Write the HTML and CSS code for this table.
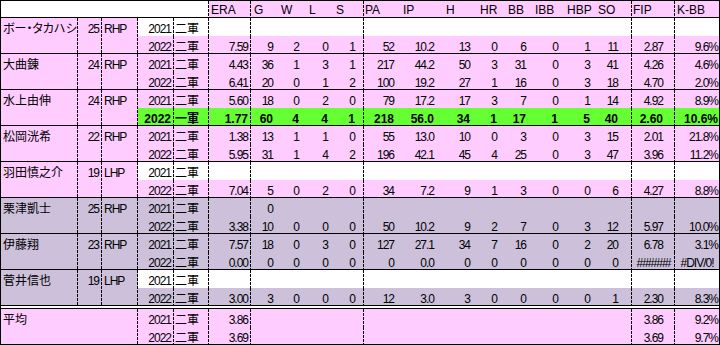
FILE: index.html
```html
<!DOCTYPE html>
<html lang="ja">
<head>
<meta charset="utf-8">
<title>投手成績</title>
<link rel="stylesheet" href="styles.css">
</head>
<body>
<div class="sheet">
  <div class="head">
    <div class="blank"></div>
    <div class="stats">
      <div>ERA</div><div>G</div><div>W</div><div>L</div><div>S</div><div>PA</div><div>IP</div><div>H</div><div>HR</div><div>BB</div><div>IBB</div><div>HBP</div><div>SO</div><div>FIP</div><div>K-BB</div>
    </div>
  </div>

  <div class="group pink">
    <div class="name">ボー・タカハシ</div>
    <div class="age">25</div>
    <div class="hand">RHP</div>
    <div class="rows">
      <div class="row r1 w">
        <div class="yr">2021</div><div class="gun">二軍</div>
        <div class="stats"><div></div><div></div><div></div><div></div><div></div><div></div><div></div><div></div><div></div><div></div><div></div><div></div><div></div><div></div><div></div></div>
      </div>
      <div class="row r2">
        <div class="yr">2022</div><div class="gun">二軍</div>
        <div class="stats"><div>7.59</div><div>9</div><div>2</div><div>0</div><div>1</div><div>52</div><div>10.2</div><div>13</div><div>0</div><div>6</div><div>0</div><div>1</div><div>11</div><div>2.87</div><div>9.6%</div></div>
      </div>
    </div>
  </div>

  <div class="group pink">
    <div class="name">大曲錬</div>
    <div class="age">24</div>
    <div class="hand">RHP</div>
    <div class="rows">
      <div class="row r1">
        <div class="yr">2021</div><div class="gun">二軍</div>
        <div class="stats"><div>4.43</div><div>36</div><div>1</div><div>3</div><div>1</div><div>217</div><div>44.2</div><div>50</div><div>3</div><div>31</div><div>0</div><div>3</div><div>41</div><div>4.26</div><div>4.6%</div></div>
      </div>
      <div class="row r2">
        <div class="yr">2022</div><div class="gun">二軍</div>
        <div class="stats"><div>6.41</div><div>20</div><div>0</div><div>1</div><div>2</div><div>100</div><div>19.2</div><div>27</div><div>1</div><div>16</div><div>0</div><div>3</div><div>18</div><div>4.70</div><div>2.0%</div></div>
      </div>
    </div>
  </div>

  <div class="group pink">
    <div class="name">水上由伸</div>
    <div class="age">24</div>
    <div class="hand">RHP</div>
    <div class="rows">
      <div class="row r1">
        <div class="yr">2021</div><div class="gun">二軍</div>
        <div class="stats"><div>5.60</div><div>18</div><div>0</div><div>2</div><div>0</div><div>79</div><div>17.2</div><div>17</div><div>3</div><div>7</div><div>0</div><div>1</div><div>14</div><div>4.92</div><div>8.9%</div></div>
      </div>
      <div class="row r2 g">
        <div class="yr">2022</div><div class="gun">一軍</div>
        <div class="stats"><div>1.77</div><div>60</div><div>4</div><div>4</div><div>1</div><div>218</div><div>56.0</div><div>34</div><div>1</div><div>17</div><div>1</div><div>5</div><div>40</div><div>2.60</div><div>10.6%</div></div>
      </div>
    </div>
  </div>

  <div class="group pink">
    <div class="name">松岡洸希</div>
    <div class="age">22</div>
    <div class="hand">RHP</div>
    <div class="rows">
      <div class="row r1">
        <div class="yr">2021</div><div class="gun">二軍</div>
        <div class="stats"><div>1.38</div><div>13</div><div>1</div><div>1</div><div>0</div><div>55</div><div>13.0</div><div>10</div><div>0</div><div>3</div><div>0</div><div>3</div><div>15</div><div>2.01</div><div>21.8%</div></div>
      </div>
      <div class="row r2">
        <div class="yr">2022</div><div class="gun">二軍</div>
        <div class="stats"><div>5.95</div><div>31</div><div>1</div><div>4</div><div>2</div><div>196</div><div>42.1</div><div>45</div><div>4</div><div>25</div><div>0</div><div>3</div><div>47</div><div>3.96</div><div>11.2%</div></div>
      </div>
    </div>
  </div>

  <div class="group pink">
    <div class="name">羽田慎之介</div>
    <div class="age">19</div>
    <div class="hand">LHP</div>
    <div class="rows">
      <div class="row r1 w">
        <div class="yr">2021</div><div class="gun">二軍</div>
        <div class="stats"><div></div><div></div><div></div><div></div><div></div><div></div><div></div><div></div><div></div><div></div><div></div><div></div><div></div><div></div><div></div></div>
      </div>
      <div class="row r2">
        <div class="yr">2022</div><div class="gun">二軍</div>
        <div class="stats"><div>7.04</div><div>5</div><div>0</div><div>2</div><div>0</div><div>34</div><div>7.2</div><div>9</div><div>1</div><div>3</div><div>0</div><div>0</div><div>6</div><div>4.27</div><div>8.8%</div></div>
      </div>
    </div>
  </div>

  <div class="group lav">
    <div class="name">栗津凱士</div>
    <div class="age">25</div>
    <div class="hand">RHP</div>
    <div class="rows">
      <div class="row r1">
        <div class="yr">2021</div><div class="gun">二軍</div>
        <div class="stats"><div></div><div>0</div><div></div><div></div><div></div><div></div><div></div><div></div><div></div><div></div><div></div><div></div><div></div><div></div><div></div></div>
      </div>
      <div class="row r2">
        <div class="yr">2022</div><div class="gun">二軍</div>
        <div class="stats"><div>3.38</div><div>10</div><div>0</div><div>0</div><div>0</div><div>50</div><div>10.2</div><div>9</div><div>2</div><div>7</div><div>0</div><div>3</div><div>12</div><div>5.97</div><div>10.0%</div></div>
      </div>
    </div>
  </div>

  <div class="group lav">
    <div class="name">伊藤翔</div>
    <div class="age">23</div>
    <div class="hand">RHP</div>
    <div class="rows">
      <div class="row r1">
        <div class="yr">2021</div><div class="gun">二軍</div>
        <div class="stats"><div>7.57</div><div>18</div><div>0</div><div>3</div><div>0</div><div>127</div><div>27.1</div><div>34</div><div>7</div><div>16</div><div>0</div><div>2</div><div>20</div><div>6.78</div><div>3.1%</div></div>
      </div>
      <div class="row r2">
        <div class="yr">2022</div><div class="gun">二軍</div>
        <div class="stats"><div>0.00</div><div>0</div><div>0</div><div>0</div><div>0</div><div>0</div><div>0.0</div><div>0</div><div>0</div><div>0</div><div>0</div><div>0</div><div>0</div><div class="err">######</div><div class="err">#DIV/0!</div></div>
      </div>
    </div>
  </div>

  <div class="group lav">
    <div class="name">菅井信也</div>
    <div class="age">19</div>
    <div class="hand">LHP</div>
    <div class="rows">
      <div class="row r1 w">
        <div class="yr">2021</div><div class="gun">二軍</div>
        <div class="stats"><div></div><div></div><div></div><div></div><div></div><div></div><div></div><div></div><div></div><div></div><div></div><div></div><div></div><div></div><div></div></div>
      </div>
      <div class="row r2">
        <div class="yr">2022</div><div class="gun">二軍</div>
        <div class="stats"><div>3.00</div><div>3</div><div>0</div><div>0</div><div>0</div><div>12</div><div>3.0</div><div>3</div><div>0</div><div>0</div><div>0</div><div>0</div><div>1</div><div>2.30</div><div>8.3%</div></div>
      </div>
    </div>
  </div>

  <div class="group avg pink">
    <div class="name wide">平均</div>
    <div class="rows">
      <div class="row r1">
        <div class="yr">2021</div><div class="gun">二軍</div>
        <div class="stats"><div>3.86</div><div></div><div></div><div></div><div></div><div></div><div></div><div></div><div></div><div></div><div></div><div></div><div></div><div>3.86</div><div>9.2%</div></div>
      </div>
      <div class="row r2">
        <div class="yr">2022</div><div class="gun">二軍</div>
        <div class="stats"><div>3.69</div><div></div><div></div><div></div><div></div><div></div><div></div><div></div><div></div><div></div><div></div><div></div><div></div><div>3.69</div><div>9.7%</div></div>
      </div>
    </div>
  </div>
</div>
</body>
</html>
```

FILE: styles.css
```css
* {
  box-sizing: border-box;
  margin: 0;
  padding: 0;
}

body {
  margin: 0;
  background: #fff;
  color: #000;
  font-family: "Liberation Sans", "Noto Sans CJK JP", sans-serif;
  font-size: 12px;
  font-feature-settings: "palt";
}

.sheet {
  width: 720px;
  height: 345px;
  border: 1px solid #000;
  display: flex;
  flex-direction: column;
  background: #fff;
}

/* dashed vertical separator drawn at the right edge of a cell */
.blank,
.name,
.age,
.hand,
.yr,
.gun,
.stats > :nth-child(1),
.stats > :nth-child(5),
.stats > :nth-child(13),
.stats > :nth-child(14) {
  background-image: linear-gradient(#000 3px, transparent 3px);
  background-size: 1px 4px;
  background-repeat: repeat-y;
  background-position: right top;
}

.head {
  display: flex;
  height: 17px;
  border-bottom: 1px solid #000;
  flex: none;
}

.blank {
  width: 208px;
  background-color: #fff;
}

.head .stats {
  background-color: #ffccff;
}

.head .stats > div {
  line-height: 13px;
  padding-top: 3px;
  text-align: left;
  white-space: nowrap;
}

.group {
  display: flex;
  height: 36px;
  border-bottom: 1px solid #000;
  flex: none;
}

.group.avg {
  margin-top: 2px;
  border-top: 1px solid #000;
  border-bottom: none;
}

.pink { background-color: #ffccff; }
.lav { background-color: #ccc0da; }

.name,
.age,
.hand,
.yr,
.gun,
.row .stats > div {
  line-height: 13px;
  padding-top: 5px;
  white-space: nowrap;
}

/* numbers in the sheet font are set narrow */
.age,
.hand,
.yr,
.row .stats > div {
  letter-spacing: -1px;
}

.name {
  width: 77px;
  padding-left: 2px;
}

.name.wide {
  width: 137px;
}

.age {
  width: 24px;
  text-align: right;
  padding-right: 3px;
}

.hand {
  width: 36px;
  padding-left: 2px;
}

.rows {
  display: flex;
  flex-direction: column;
  width: 581px;
}

.row {
  display: flex;
}

.r1 { height: 18px; }
.r2 { height: 17px; }

.row.w { background-color: #fff; }
.row.g { background-color: #66ff33; font-weight: bold; }
.row.g .yr,
.row.g .stats > div { letter-spacing: 0; }

.yr {
  width: 36px;
  text-align: right;
  padding-right: 3px;
}

.gun {
  width: 35px;
  padding-left: 1px;
}

.stats {
  display: grid;
  grid-template-columns: 42px 26px 28px 27px 32px 35px 42px 35px 28px 28px 32px 32px 36px 43px 44px;
  width: 510px;
}

.row .stats > div { text-align: right; }

.row .stats > :nth-child(1) { padding-right: 3px; }
.row .stats > :nth-child(2) { padding-right: 4px; }
.row .stats > :nth-child(3) { padding-right: 6px; }
.row .stats > :nth-child(4) { padding-right: 4px; }
.row .stats > :nth-child(5) { padding-right: 9px; }
.row .stats > :nth-child(6) { padding-right: 5px; }
.row .stats > :nth-child(7) { padding-right: 7px; }
.row .stats > :nth-child(8) { padding-right: 6px; }
.row .stats > :nth-child(9) { padding-right: 7px; }
.row .stats > :nth-child(10) { padding-right: 6px; }
.row .stats > :nth-child(11) { padding-right: 6px; }
.row .stats > :nth-child(12) { padding-right: 6px; }
.row .stats > :nth-child(13) { padding-right: 14px; }
.row .stats > :nth-child(14) { padding-right: 12px; }
.row .stats > :nth-child(15) { padding-right: 1px; }

.row .stats > .err {
  text-align: center;
  padding-right: 0;
}

.head .stats > :nth-child(1) { padding-left: 2px; }
.head .stats > :nth-child(2) { padding-left: 3px; }
.head .stats > :nth-child(3) { padding-left: 4px; }
.head .stats > :nth-child(4) { padding-left: 4px; }
.head .stats > :nth-child(5) { padding-left: 4px; }
.head .stats > :nth-child(6) { padding-left: 1px; }
.head .stats > :nth-child(7) { padding-left: 4px; }
.head .stats > :nth-child(8) { padding-left: 5px; }
.head .stats > :nth-child(9) { padding-left: 4px; }
.head .stats > :nth-child(10) { padding-left: 4px; }
.head .stats > :nth-child(11) { padding-left: 3px; }
.head .stats > :nth-child(12) { padding-left: 3px; }
.head .stats > :nth-child(13) { padding-left: 2px; }
.head .stats > :nth-child(14) { padding-left: 1px; }
.head .stats > :nth-child(15) { padding-left: 2px; }
```
